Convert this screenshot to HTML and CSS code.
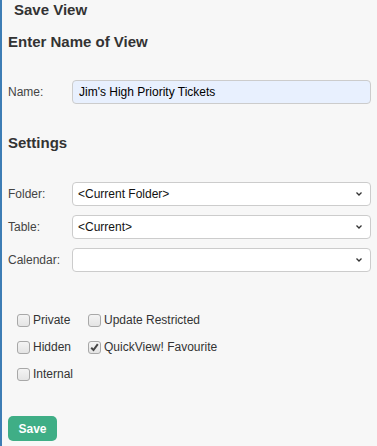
FILE: index.html
```html
<!DOCTYPE html>
<html lang="en">
<head>
    <meta charset="UTF-8">
    <title>Save View</title>
    <link rel="stylesheet" href="styles.css">
</head>
<body>
    <div class="panel">
        <div class="panel-title">Save View</div>
        <h2>Enter Name of View</h2>
        <div class="field name-field">
            <label for="viewName">Name:</label>
            <input type="text" id="viewName" class="input filled" value="Jim's High Priority Tickets">
        </div>

        <h2 class="settings">Settings</h2>
        <div class="field">
            <label for="folder">Folder:</label>
            <div class="select">
                <span>&lt;Current Folder&gt;</span>
                <svg width="8" height="6" viewBox="0 0 8 6"><path d="M1.5 1.5 L4 4 L6.5 1.5" fill="none" stroke="#333" stroke-width="1.3"/></svg>
            </div>
        </div>
        <div class="field">
            <label for="table">Table:</label>
            <div class="select">
                <span>&lt;Current&gt;</span>
                <svg width="8" height="6" viewBox="0 0 8 6"><path d="M1.5 1.5 L4 4 L6.5 1.5" fill="none" stroke="#333" stroke-width="1.3"/></svg>
            </div>
        </div>
        <div class="field">
            <label for="calendar">Calendar:</label>
            <div class="select">
                <span></span>
                <svg width="8" height="6" viewBox="0 0 8 6"><path d="M1.5 1.5 L4 4 L6.5 1.5" fill="none" stroke="#333" stroke-width="1.3"/></svg>
            </div>
        </div>

        <div class="options">
            <div class="option"><span class="box"></span>Private</div>
            <div class="option"><span class="box"></span>Update Restricted</div>
            <div class="option"><span class="box"></span>Hidden</div>
            <div class="option"><span class="box"><svg width="11" height="11" viewBox="0 0 11 11"><path d="M2.2 5.8 L4.5 8 L8.8 2.2" fill="none" stroke="#444" stroke-width="2"/></svg></span>QuickView! Favourite</div>
            <div class="option"><span class="box"></span>Internal</div>
        </div>

        <button class="btn">Save</button>
    </div>
</body>
</html>
```

FILE: styles.css
```css
* {
    margin: 0;
    padding: 0;
    box-sizing: border-box;
}

body {
    font-family: 'Liberation Sans', Arial, sans-serif;
    font-size: 12px;
    color: #333;
    background: #f7f7f7;
}

.panel {
    min-height: 446px;
    border-left: 2px solid #3d7db5;
    padding: 0 6px;
}

.panel-title {
    font-size: 15px;
    font-weight: 700;
    line-height: 20px;
    padding-left: 6px;
}

h2 {
    font-size: 15px;
    font-weight: 700;
    line-height: 20px;
    margin-top: 12px;
}

h2.settings {
    margin-top: 29px;
    margin-bottom: 29px;
}

.field {
    display: flex;
    align-items: center;
    margin-bottom: 9px;
}

.name-field {
    margin-top: 28px;
}

.field label {
    width: 64px;
    color: #444;
}

.input,
.select {
    flex: 1;
    height: 24px;
    border: 1px solid #ccc;
    border-radius: 4px;
    background: #fff;
    font-family: inherit;
    font-size: 12px;
    color: #111;
    padding: 0 6px;
}

.input.filled {
    background: #e8f0fe;
    color: #000;
}

.select {
    display: flex;
    align-items: center;
    justify-content: space-between;
    padding: 0 7px 0 5px;
}

.options {
    display: grid;
    grid-template-columns: 71px auto;
    row-gap: 11px;
    margin-top: 40px;
    padding-left: 9px;
    color: #333;
}

.option {
    display: flex;
    align-items: center;
    line-height: 16px;
}

.box {
    width: 13px;
    height: 13px;
    border: 1px solid #a8a8a8;
    border-radius: 3px;
    background: linear-gradient(#f4f4f4, #e4e4e4);
    margin-right: 3px;
    display: flex;
    align-items: center;
    justify-content: center;
}

.btn {
    margin-top: 34px;
    width: 49px;
    height: 25px;
    border: none;
    border-radius: 5px;
    background: #3fae86;
    color: #fff;
    font-family: inherit;
    font-size: 12px;
    font-weight: 700;
}
```
